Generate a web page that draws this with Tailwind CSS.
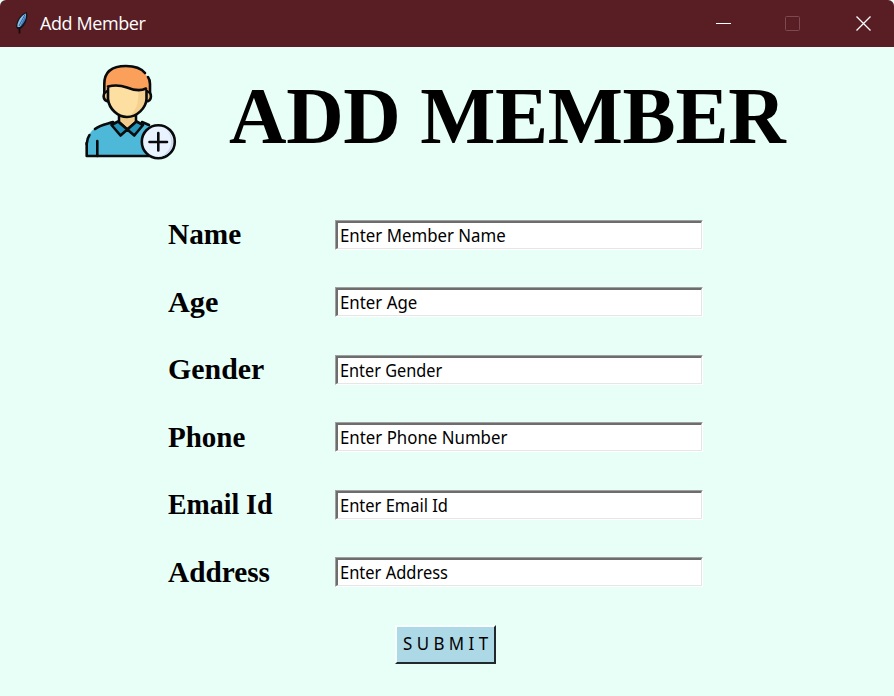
<!DOCTYPE html>
<html lang="en">
<head>
<meta charset="utf-8">
<title>Add Member</title>
<script src="https://cdn.jsdelivr.net/npm/@tailwindcss/browser@4"></script>
</head>
<body class="w-[894px] h-[696px] overflow-hidden bg-[#e8fff8]">
<div class="flex h-[696px] flex-col bg-[#e8fff8] text-black">
  <header class="flex h-[47px] shrink-0 items-center rounded-t-[6px] bg-[#591d24] pl-[14px] text-white">
    <svg class="-mt-[1px] h-[24px] w-[16px]" viewBox="0 0 16 24">
      <path d="M12.800 1 C8 2.500 3 8 2.200 14 C2 17.500 3.500 19 6 18 C11 16 15 6 12.800 1Z" fill="#14161d"/>
      <path d="M12 2.500 C8 4 3.500 9.500 3.300 15.500 C5 17.500 7 15 8 13 C11 10 12.500 6 12 2.500Z" fill="#8fc0e4"/>
      <path d="M11.500 4 L6 15.500 C10 13 12.200 8 11.500 4Z" fill="#3c76bd"/>
      <path d="M11 3.500 L7 11 L5 15" stroke="#2f5f9e" stroke-width="1" fill="none"/>
      <path d="M5.500 16 V22.500" stroke="#160b0e" stroke-width="1.800"/>
    </svg>
    <span class="-mt-[2px] ml-[10px] w-[660px] font-['Open_Sans',sans-serif] text-[18px] leading-[24px] tracking-[-0.4px]">Add Member</span>
    <svg class="ml-[16px] -mt-[1px] h-[16px] w-[156px]" viewBox="0 0 156 16" fill="none">
      <path d="M0 8.500 H15" stroke="#fff"/>
      <rect x="69.500" y="1.500" width="14" height="14" rx="1" stroke="#7d4a50"/>
      <path d="M140.500 1.500 L154.500 15.500 M154.500 1.500 L140.500 15.500" stroke="#fff" stroke-width="1.300"/>
    </svg>
  </header>
  <main class="flex flex-col font-['Liberation_Serif',serif] font-bold">
    <div class="flex h-[154px] items-start pl-[83px]">
      <svg class="mt-[15px] h-[100px] w-[96px] shrink-0" viewBox="0 0 96 100" stroke-linejoin="round" stroke-linecap="round">
        <path d="M3.500 94 V84 C4 74 8 68 13 66 L29 60 L36 59 H53 L68 64 L74 94Z" fill="#4eb8d8"/>
        <path d="M12 67 C17 63 24 62 30 60 M3.700 81 V94 H66 M59 60 L66 63" fill="none" stroke="#080a0c" stroke-width="2.600"/>
        <path d="M3.700 82 C4 77 5 75 6.500 73" fill="none" stroke="#080a0c" stroke-width="2.600"/>
        <path d="M36 53 V60 L44.300 67.500 L53 60 V53Z" fill="#f1cc8b" stroke="#080a0c" stroke-width="2.500"/>
        <path d="M35 59.500 L28.500 63 L37.500 73.500 L44.300 67.500 L51.300 73.500 L60 63 L53.500 59.500 L44.300 67.500Z" fill="#2596ba" stroke="#080a0c" stroke-width="2.600"/>
        <path d="M25 29 C19 30 19 39 26 39.500 M63.500 29 C69.500 30 69.500 39 63 39.500" fill="#efc47f" stroke="#080a0c" stroke-width="2.600"/>
        <path d="M25 24 V37 C26 47 35 55 44 55 C54 55 63 46 63.500 37 V24Z" fill="#fddfa1"/>
        <path d="M55 27 H63 V38 C62 47 53 54 46 54 C54 48 56 40 55 27Z" fill="#f5d190"/>
        <path d="M25 24 V37 C26 47 35 55 44 55 C54 55 63 46 63.500 37 V25" fill="none" stroke="#080a0c" stroke-width="2.600"/>
        <path d="M21.300 31 V22 C21.300 9 30 4 43 4 C53 4 60 6 63 13 C67 17 67 21 67 30 L63 26.500 C58 30 50 28 44 25.500 C37 23 31 23 25 24.500Z" fill="#fba05b"/>
        <path d="M62 11 C58 6 52 4 43 4 C29 4 21.300 10 21.300 22 V31 M67 31 V22 C67 19 66.500 17 65 15 M25 24.500 C31 23 37 23 44 25.500 C50 28 57 29.500 63 26.500" fill="none" stroke="#080a0c" stroke-width="2.600"/>
        <path d="M14.300 79 V94" stroke="#080a0c" stroke-width="2.600"/>
        <circle cx="75.300" cy="79.700" r="16.500" fill="#e9f2ff" stroke="#080a0c" stroke-width="2.600"/>
        <path d="M82.500 67 C92 76 89 90 77.500 94.500 C91.500 92 94.500 76 82.500 67Z" fill="#cad8f2"/>
        <path d="M66.500 80 H84 M75.300 71 V88.500" stroke="#080a0c" stroke-width="2.600"/>
      </svg>
      <h1 class="mt-[24px] ml-[50px] origin-left scale-x-[.995] text-[80px] leading-[90px] tracking-[-0.3px] whitespace-nowrap">ADD MEMBER</h1>
    </div>
    <form class="flex flex-col pl-[168px] text-[29.3px]">
      <label class="flex h-[67.5px] items-center"><span class="mt-[1px] w-[167px]">Name</span><span class="h-[30px] w-[368px] border border-t-[#a0a0a0] border-l-[#a0a0a0] border-r-white border-b-white bg-white"><span class="flex h-[28px] items-center border-t-2 border-l-2 border-r border-b border-t-[#6d6d6d] border-l-[#6d6d6d] border-r-[#e6e6e6] border-b-[#e6e6e6] pl-[2px] font-['Noto_Sans',sans-serif] text-[18px] font-normal"><span class="origin-left scale-x-[.935] whitespace-nowrap">Enter Member Name</span></span></span></label>
      <label class="flex h-[67.5px] items-center"><span class="mt-[1px] w-[167px]"><span class="inline-block origin-left scale-x-[1.03]">Age</span></span><span class="h-[30px] w-[368px] border border-t-[#a0a0a0] border-l-[#a0a0a0] border-r-white border-b-white bg-white"><span class="flex h-[28px] items-center border-t-2 border-l-2 border-r border-b border-t-[#6d6d6d] border-l-[#6d6d6d] border-r-[#e6e6e6] border-b-[#e6e6e6] pl-[2px] font-['Noto_Sans',sans-serif] text-[18px] font-normal"><span class="origin-left scale-x-[.935] whitespace-nowrap">Enter Age</span></span></span></label>
      <label class="flex h-[67.5px] items-center"><span class="mt-[1px] w-[167px]"><span class="inline-block origin-left scale-x-[1.02]">Gender</span></span><span class="h-[30px] w-[368px] border border-t-[#a0a0a0] border-l-[#a0a0a0] border-r-white border-b-white bg-white"><span class="flex h-[28px] items-center border-t-2 border-l-2 border-r border-b border-t-[#6d6d6d] border-l-[#6d6d6d] border-r-[#e6e6e6] border-b-[#e6e6e6] pl-[2px] font-['Noto_Sans',sans-serif] text-[18px] font-normal"><span class="origin-left scale-x-[.905] whitespace-nowrap">Enter Gender</span></span></span></label>
      <label class="flex h-[67.5px] items-center"><span class="mt-[1px] w-[167px]"><span class="inline-block origin-left scale-x-[.99]">Phone</span></span><span class="h-[30px] w-[368px] border border-t-[#a0a0a0] border-l-[#a0a0a0] border-r-white border-b-white bg-white"><span class="flex h-[28px] items-center border-t-2 border-l-2 border-r border-b border-t-[#6d6d6d] border-l-[#6d6d6d] border-r-[#e6e6e6] border-b-[#e6e6e6] pl-[2px] font-['Noto_Sans',sans-serif] text-[18px] font-normal"><span class="origin-left scale-x-[.935] whitespace-nowrap">Enter Phone Number</span></span></span></label>
      <label class="flex h-[67.5px] items-center"><span class="mt-[1px] w-[167px]"><span class="inline-block origin-left scale-x-[.95]">Email Id</span></span><span class="h-[30px] w-[368px] border border-t-[#a0a0a0] border-l-[#a0a0a0] border-r-white border-b-white bg-white"><span class="flex h-[28px] items-center border-t-2 border-l-2 border-r border-b border-t-[#6d6d6d] border-l-[#6d6d6d] border-r-[#e6e6e6] border-b-[#e6e6e6] pl-[2px] font-['Noto_Sans',sans-serif] text-[18px] font-normal"><span class="origin-left scale-x-[.915] whitespace-nowrap">Enter Email Id</span></span></span></label>
      <label class="flex h-[67.5px] items-center"><span class="mt-[1px] w-[167px]">Address</span><span class="h-[30px] w-[368px] border border-t-[#a0a0a0] border-l-[#a0a0a0] border-r-white border-b-white bg-white"><span class="flex h-[28px] items-center border-t-2 border-l-2 border-r border-b border-t-[#6d6d6d] border-l-[#6d6d6d] border-r-[#e6e6e6] border-b-[#e6e6e6] pl-[2px] font-['Noto_Sans',sans-serif] text-[18px] font-normal"><span class="origin-left scale-x-[.915] whitespace-nowrap">Enter Address</span></span></span></label>
      <button type="button" class="mt-[19px] ml-[227px] flex h-[39px] w-[101px] items-center border-t-2 border-l-2 border-r-2 border-b-2 border-t-[#f8ffff] border-l-[#f8ffff] border-r-[#20292c] border-b-[#20292c] bg-[#add8e6] pl-[6px] font-['Noto_Sans',sans-serif] text-[18px] font-normal"><span class="-mt-[2px] origin-left scale-x-[.94] whitespace-nowrap">S U B M I T</span></button>
    </form>
  </main>
</div>
</body>
</html>
